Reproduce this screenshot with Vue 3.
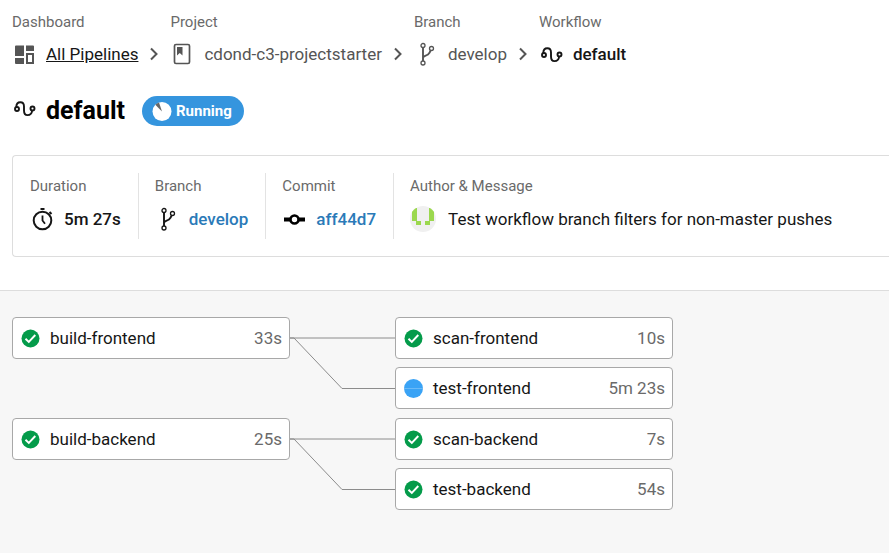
<script setup>
const crumbs = [
  { label: 'Dashboard', text: 'All Pipelines', icon: 'dashboard', href: '#pipelines' },
  { label: 'Project', text: 'cdond-c3-projectstarter', icon: 'project', href: '#project' },
  { label: 'Branch', text: 'develop', icon: 'branch', href: '#branch' },
  { label: 'Workflow', text: 'default', icon: 'workflow' },
]

const facts = [
  { label: 'Duration', text: '5m 27s', icon: 'timer' },
  { label: 'Branch', text: 'develop', icon: 'branch', href: '#branch' },
  { label: 'Commit', text: 'aff44d7', icon: 'commit', href: '#commit' },
]

const groups = [
  {
    job: { name: 'build-frontend', time: '33s', status: 'success' },
    next: [
      { name: 'scan-frontend', time: '10s', status: 'success' },
      { name: 'test-frontend', time: '5m 23s', status: 'running' },
    ],
  },
  {
    job: { name: 'build-backend', time: '25s', status: 'success' },
    next: [
      { name: 'scan-backend', time: '7s', status: 'success' },
      { name: 'test-backend', time: '54s', status: 'success' },
    ],
  },
]
</script>

<template>
  <svg class="sprite" aria-hidden="true">
    <symbol id="dashboard" viewBox="0 0 24 24">
      <path fill="currentColor" d="M4 3.500h8V14H3V4.500a1 1 0 0 1 1-1zM14 3.500h7a1 1 0 0 1 1 1V9h-8zM3 16h9v6H4a1 1 0 0 1-1-1z" />
      <rect x="15" y="12" width="6" height="9" fill="none" stroke="currentColor" stroke-width="2" />
    </symbol>
    <symbol id="project" viewBox="0 0 24 24">
      <rect x="4.500" y="2.500" width="15" height="19" rx="1.500" fill="none" stroke="currentColor" stroke-width="1.700" />
      <path fill="currentColor" d="M7 5h5.500v8.500L9.750 11 7 13.500z" />
    </symbol>
    <symbol id="branch" viewBox="0 0 24 24">
      <g fill="none" stroke="currentColor">
        <circle cx="9" cy="3.500" r="2" stroke-width="1.300" />
        <circle cx="17.500" cy="6.500" r="2" stroke-width="1.300" />
        <circle cx="9" cy="21" r="2" stroke-width="1.300" />
        <path d="M9 5.500V19M9 15.500c1-2 3-1.600 5-3 1.500-1 2-2 2.500-4" stroke-width="1.900" />
      </g>
    </symbol>
    <symbol id="workflow" viewBox="0 0 24 24">
      <g fill="none" stroke="currentColor" stroke-width="1.900">
        <circle cx="5" cy="13" r="2" />
        <circle cx="20.500" cy="12.500" r="2" />
        <path d="M4.300 11.200C4.300 8 6 6.300 8.300 6.300c2.500 0 3.700 1.600 3.700 4.200v4c0 2.800 1.200 4.600 3.500 4.600 2.800 0 4.400-2 4.600-4.600" />
      </g>
    </symbol>
    <symbol id="timer" viewBox="0 0 24 24">
      <g fill="none" stroke="currentColor">
        <circle cx="12.500" cy="13.500" r="8.800" stroke-width="2" />
        <path d="M12.500 8.500v5l2.500 3.300" stroke-width="1.800" />
        <path d="M10.500 2h4M19.500 5l2 2" stroke-width="2" />
      </g>
    </symbol>
    <symbol id="commit" viewBox="0 0 24 24">
      <path d="M2 12.500h6M17 12.500h6" fill="none" stroke="#000" stroke-width="4" />
      <circle cx="12.500" cy="12.500" r="4" fill="none" stroke="#000" stroke-width="2.600" />
    </symbol>
    <symbol id="chevron" viewBox="0 0 24 24">
      <path d="M9 6.500l5.500 5.500L9 17.500" fill="none" stroke="currentColor" stroke-width="2" />
    </symbol>
    <symbol id="success" viewBox="0 0 20 20">
      <circle cx="10.500" cy="10.500" r="9" fill="#049b4a" />
      <path d="M5.500 10.800l3.300 3.200 6.500-7" fill="none" stroke="#fff" stroke-width="1.900" />
    </symbol>
    <symbol id="running" viewBox="0 0 20 20">
      <circle cx="10.500" cy="10.500" r="9.500" fill="#3aa3f5" />
      <path d="M1 10.500h19" stroke="#6bbaf7" />
    </symbol>
  </svg>

  <div class="page">
    <nav class="crumbs" aria-label="Breadcrumb">
      <div v-for="(crumb, i) in crumbs" :key="crumb.label" class="crumb">
        <span class="label">{{ crumb.label }}</span>
        <div class="value">
          <svg class="icon" :class="{ current: !crumb.href }"><use :href="'#' + crumb.icon" /></svg>
          <a v-if="crumb.href" :href="crumb.href" :class="{ underlined: i === 0 }">{{ crumb.text }}</a>
          <span v-else class="current">{{ crumb.text }}</span>
          <svg v-if="i < crumbs.length - 1" class="icon chevron"><use href="#chevron" /></svg>
        </div>
      </div>
    </nav>

    <header class="title">
      <svg class="icon"><use href="#workflow" /></svg>
      <h1>default</h1>
      <span class="badge">
        <svg class="spinner" viewBox="0 0 20 20">
          <circle cx="10" cy="10.500" r="9.500" fill="#fff" />
          <path d="M10 10.500L3.300 3.800A9.500 9.500 0 0 1 7 1.500z" fill="#666" />
        </svg>
        Running
      </span>
    </header>

    <section class="facts">
      <div v-for="fact in facts" :key="fact.label" class="fact">
        <span class="label">{{ fact.label }}</span>
        <div class="value">
          <svg class="icon"><use :href="'#' + fact.icon" /></svg>
          <a v-if="fact.href" :href="fact.href">{{ fact.text }}</a>
          <span v-else class="strong">{{ fact.text }}</span>
        </div>
      </div>
      <div class="fact">
        <span class="label">Author &amp; Message</span>
        <div class="value author">
          <svg class="avatar" viewBox="0 0 26 26">
            <clipPath id="round"><circle cx="13" cy="13" r="13" /></clipPath>
            <g clip-path="url(#round)">
              <path fill="#f0f0f0" d="M0 0h26v26H0z" />
              <path fill="#9bd84e" d="M2 2h5v13H2zM19 2h5v13h-5zM6 15h5v4H6zM15 15h5v4h-5z" />
            </g>
          </svg>
          <span>Test workflow branch filters for non-master pushes</span>
        </div>
      </div>
    </section>

    <main class="graph">
      <div v-for="group in groups" :key="group.job.name" class="group">
        <a class="job" href="#job">
          <svg class="status"><use :href="'#' + group.job.status" /></svg>
          <span class="name">{{ group.job.name }}</span>
          <span class="time">{{ group.job.time }}</span>
        </a>
        <svg class="links" viewBox="0 0 105 92" aria-hidden="true">
          <path d="M0 21H105" />
          <path d="M0 21H4L52 71.500H105" />
        </svg>
        <div class="next">
          <a v-for="job in group.next" :key="job.name" class="job" href="#job">
            <svg class="status"><use :href="'#' + job.status" /></svg>
            <span class="name">{{ job.name }}</span>
            <span class="time">{{ job.time }}</span>
          </a>
        </div>
      </div>
    </main>
  </div>
</template>

<style>
body {
  margin: 0;
  background: #fff;
}
</style>

<style scoped>
.sprite {
  display: none;
}
.page {
  display: flex;
  flex-direction: column;
  min-height: 100vh;
  font-family: Roboto, "Liberation Sans", sans-serif;
  font-size: 17px;
  line-height: 24px;
  color: #161616;
}
a {
  color: inherit;
  text-decoration: none;
}
.icon {
  flex: none;
  width: 24px;
  height: 24px;
}
.label {
  font-size: 15px;
  line-height: 20px;
  color: #6a6a6a;
  white-space: nowrap;
}
.value {
  display: flex;
  align-items: center;
  gap: 10px;
  white-space: nowrap;
}
.crumbs {
  display: flex;
  padding: 12px 12px 0;
}
.crumb {
  display: flex;
  flex-direction: column;
  gap: 10px;
  color: #555;
}
.chevron {
  margin: 0 4px 0 -6px;
}
.underlined {
  color: #161616;
  text-decoration: underline;
}
.current {
  font-weight: 500;
  color: #161616;
}
.title {
  display: flex;
  align-items: center;
  gap: 10px;
  padding: 30px 12px 0;
}
.title .icon {
  align-self: flex-start;
}
h1 {
  margin: 0;
  font-size: 25px;
  line-height: 30px;
  font-weight: 700;
  color: #000;
}
.badge {
  display: flex;
  align-items: center;
  gap: 4px;
  height: 30px;
  margin-left: 7px;
  padding: 0 12px 0 10px;
  border-radius: 15px;
  background: #3595de;
  color: #fff;
  font-size: 15px;
  font-weight: 700;
}
.spinner {
  width: 20px;
  height: 20px;
}
.facts {
  display: flex;
  margin: 29px 0 33px 12px;
  padding: 17px 0;
  border: 1px solid #ddd;
  border-right: 0;
  border-radius: 4px 0 0 4px;
}
.fact {
  display: flex;
  flex-direction: column;
  gap: 10px;
  padding: 3px 17px 7px;
}
.fact .value {
  min-height: 26px;
}
.fact + .fact {
  padding-left: 16px;
  border-left: 1px solid #e3e3e3;
}
.fact a {
  color: #2a7ab8;
  font-weight: 500;
}
.strong {
  font-weight: 500;
}
.author {
  gap: 12px;
}
.avatar {
  width: 26px;
  height: 26px;
}
.graph {
  flex: 1;
  display: flex;
  flex-direction: column;
  gap: 9px;
  padding: 26px 12px;
  border-top: 1px solid #ddd;
  background: #f7f7f7;
}
.group {
  display: flex;
  align-items: flex-start;
}
.links {
  flex: none;
  width: 105px;
  height: 92px;
  fill: none;
  stroke: #8c8c8c;
}
.next {
  display: flex;
  flex-direction: column;
  gap: 8px;
}
.job {
  box-sizing: border-box;
  display: flex;
  align-items: center;
  gap: 10px;
  width: 278px;
  height: 42px;
  padding: 0 7px;
  border: 1px solid #a8a8a8;
  border-radius: 4px;
  background: #fff;
}
.status {
  width: 20px;
  height: 20px;
}
.time {
  margin-left: auto;
  color: #6a6a6a;
}
</style>
